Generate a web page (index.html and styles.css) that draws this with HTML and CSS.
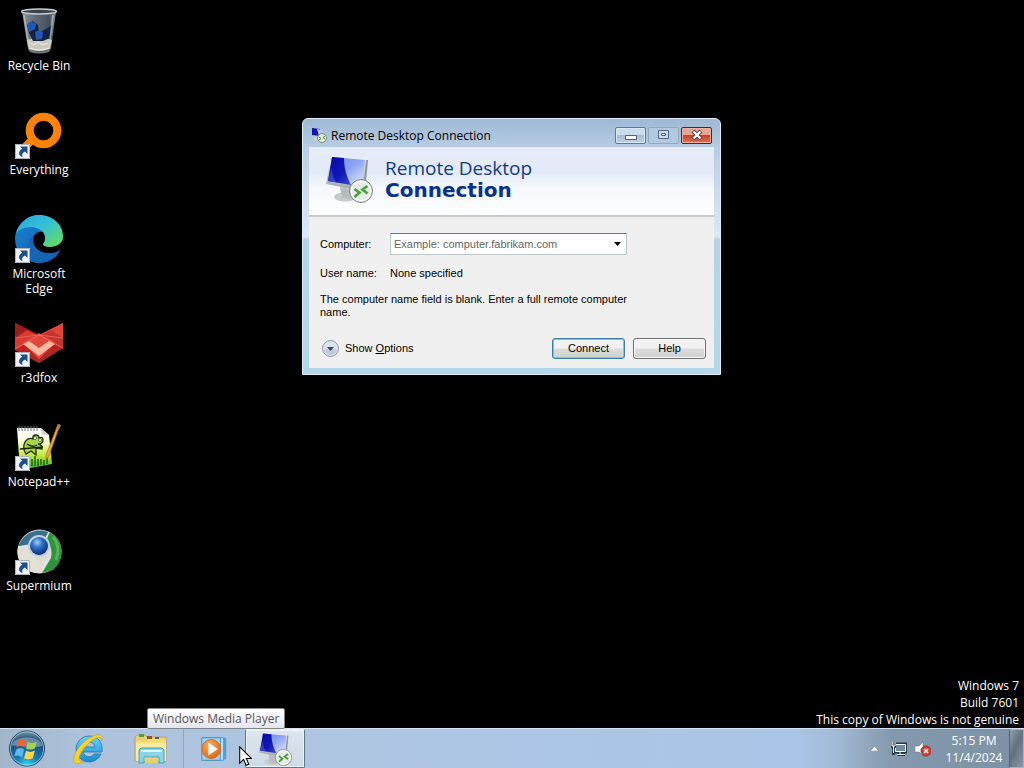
FILE: index.html
```html
<!DOCTYPE html>
<html lang="en">
<head>
<meta charset="utf-8">
<title>Desktop</title>
<link rel="stylesheet" href="styles.css">
</head>
<body>
<svg class="defs" aria-hidden="true">
  <defs>
    <linearGradient id="screen" x1="0" y1="0" x2="1" y2="1"><stop offset="0" stop-color="#6f82ea"/><stop offset=".5" stop-color="#8fa6f2"/><stop offset="1" stop-color="#eef3ff"/></linearGradient>
    <linearGradient id="metal" x1="0" y1="0" x2="0" y2="1"><stop offset="0" stop-color="#f2f3f4"/><stop offset="1" stop-color="#9ea4ab"/></linearGradient>
    <linearGradient id="navy" x1="0" y1="0" x2="1" y2="1"><stop offset="0" stop-color="#0808a0"/><stop offset=".6" stop-color="#1018b8"/><stop offset="1" stop-color="#3a50d0"/></linearGradient>
    <linearGradient id="glass" x1="0" y1="0" x2="1" y2="0"><stop offset="0" stop-color="#8b949c"/><stop offset=".3" stop-color="#66717c"/><stop offset=".8" stop-color="#454f5b"/><stop offset="1" stop-color="#8c969e"/></linearGradient>
    <linearGradient id="edgeTop" x1="0" y1="0" x2="1" y2="1"><stop offset="0" stop-color="#2ba5dc"/><stop offset=".45" stop-color="#35bfd8"/><stop offset="1" stop-color="#6be04d"/></linearGradient>
    <linearGradient id="edgeLow" x1="0" y1="0" x2="1" y2="1"><stop offset="0" stop-color="#1683d5"/><stop offset="1" stop-color="#155ba8"/></linearGradient>
    <linearGradient id="paper" x1="0" y1="0" x2="0" y2="1"><stop offset="0" stop-color="#fff"/><stop offset=".35" stop-color="#f7fbd0"/><stop offset=".65" stop-color="#c5e83c"/><stop offset="1" stop-color="#39a32c"/></linearGradient>
    <linearGradient id="ie" x1="0" y1="0" x2="0" y2="1"><stop offset="0" stop-color="#6bd3f7"/><stop offset="1" stop-color="#168bd2"/></linearGradient>
    <radialGradient id="globe" cx=".4" cy=".3" r=".7"><stop offset="0" stop-color="#a7d2fa"/><stop offset=".4" stop-color="#3272c8"/><stop offset="1" stop-color="#0a2d78"/></radialGradient>
    <radialGradient id="orb" cx=".5" cy="1" r="1"><stop offset="0" stop-color="#38dcf4"/><stop offset=".35" stop-color="#147ab4"/><stop offset=".75" stop-color="#1c4b78"/><stop offset="1" stop-color="#7898ae"/></radialGradient>
    <radialGradient id="wmp" cx=".4" cy=".3" r=".8"><stop offset="0" stop-color="#f8a95b"/><stop offset="1" stop-color="#dc640d"/></radialGradient>
    <symbol id="shortcut" viewBox="0 0 15 15">
      <path d="M0 0h15v15H0z" fill="#eef2f6"/><path d="M.5.5h14v14H.5z" fill="none" stroke="#a9b4bf"/>
      <path d="M5 2.500h7.500V10L10 7.500C7.500 8.500 6.500 10.500 7.500 13 3.500 12 2.500 7.500 7.200 4.700z" fill="#1d5088"/>
    </symbol>
    <symbol id="remote" viewBox="0 0 48 48">
      <ellipse cx="20" cy="42" rx="11" ry="4.500" fill="#c6cacd"/>
      <path d="M15 32l14 3 2 9-14-1z" fill="#b7bcc1"/>
      <path d="M6 1l36 3-2 33L1 29z" fill="url(#metal)"/>
      <path d="M7 2l33 3-3 27L3 26z" fill="url(#screen)"/>
      <path d="M7 2l12 1c0 11 3 19 7 27L3 26z" fill="url(#navy)"/>
      <path d="M7 12c0 7 1 11 5 15.500L3 26z" fill="#3f58cc" opacity=".7"/>
      <path d="M41 5l2 0-3 32-2-.5z" fill="#8e959e"/>
      <circle cx="36" cy="36" r="11.500" fill="#e6eae6" stroke="#7d8580"/>
      <circle cx="36" cy="36" r="9.500" fill="none" stroke="#fff" stroke-width="1"/>
      <path d="M29.500 34l5 3.700-5 4.300M42.500 31l-5 3.500 5 4" fill="none" stroke="#45a237" stroke-width="2.600"/>
    </symbol>
  </defs>
</svg>

<main class="desktop">
  <nav class="shortcuts" aria-label="Desktop shortcuts">
    <button class="shortcut">
      <svg class="shortcut-icon" viewBox="0 0 48 48">
        <path d="M7 4l6 38q1 4 11 4t12-4l5-38z" fill="url(#glass)"/>
        <path d="M12 33q12-5 25 0l-2 9q-11 4-21 0z" fill="#cac8c1"/>
        <path d="M12 18l6-4 5 4 1 7 5-2 7-1-1 9-7 3-10 0-4-8z" fill="#14243f"/>
        <path d="M12 18q3-6 9-1l-1 5-6 3zM20 25q4-3 8 0l-1 7-6 1z" fill="#2256b8"/>
        <path d="M28 24l9-6-2 7-5 1z" fill="#102548"/>
        <path d="M9 8l5 32M38 8l-4 32" stroke="#d0d7dc" stroke-opacity=".6" stroke-width="1.500"/>
        <path d="M15 36l4 2 4-3 5 3 5-2M15 41q9 4 19 0" stroke="#f1eee4" fill="none"/>
        <ellipse cx="24" cy="4.500" rx="17.500" ry="2.500" fill="#37434e" stroke="#c7cdd1" stroke-width="1.300"/>
        <path d="M14 43q10 4 21 0l-1 2q-10 3-19 0z" fill="#74787c"/>
      </svg>
      <span>Recycle Bin</span>
    </button>
    <button class="shortcut">
      <svg class="shortcut-icon" viewBox="0 0 48 48">
        <circle cx="28.500" cy="19.500" r="13.800" fill="none" stroke="#ff8207" stroke-width="8"/>
        <path d="M18 28L9 37" stroke="#ff8207" stroke-width="8"/>
        <use href="#shortcut" x="0" y="33" width="15" height="15"/>
      </svg>
      <span>Everything</span>
    </button>
    <button class="shortcut">
      <svg class="shortcut-icon" viewBox="0 0 48 48">
        <circle cx="24" cy="24" r="24" fill="url(#edgeLow)"/>
        <path d="M1 19C4 8 13 0 24 0c14 0 24 10 24 21 0 7-6 11-13 11-5 0-7-1-7-3 0-1 2-2 2-6 0-6-6-11-14-11C9 12 3 15 1 19z" fill="url(#edgeTop)"/>
        <path d="M28 17c-6-1-10 3-10 8 0 8 8 14 17 13 5 0 10-2 13-6V25c-3 5-8 7-13 7-5 0-7-1-7-3 0-1 2-2 2-6 0-2-1-4-2-6z" fill="#000"/>
        <path d="M18 22c-2 10 5 20 17 18 4 0 7-1 10-4-4 7-12 12-21 12C13 48 9 35 13 28c1-3 3-5 5-6z" fill="#1764b4"/>
        <use href="#shortcut" x="0" y="33" width="15" height="15"/>
      </svg>
      <span>Microsoft Edge</span>
    </button>
    <button class="shortcut">
      <svg class="shortcut-icon" viewBox="0 0 48 48">
        <path d="M0 4l24 12L48 4v25L24 44 0 31z" fill="#bd211e"/>
        <path d="M0 4l24 12-14 8L0 19z" fill="#a01c1b"/>
        <path d="M48 4L24 16l14 8 10-5z" fill="#e24439"/>
        <path d="M0 19l12-8 12 6-24 14z" fill="#d93a30"/>
        <path d="M48 19l-12-8-12 6 24 13z" fill="#c5342e"/>
        <path d="M8 23l16-9 16 9-16 18z" fill="#e0463a"/>
        <path d="M8 25l6-3 10 7 10-7 6 3-16 12z" fill="#ffb8a0"/>
        <path d="M10 31l14 9 14-9v4L24 44 10 36z" fill="#a82a25"/>
        <path d="M0 19l24-3 24 3M0 30l24-14 24 13" fill="none" stroke="#f27463" stroke-width=".7"/>
        <use href="#shortcut" x="0" y="33" width="15" height="15"/>
      </svg>
      <span>r3dfox</span>
    </button>
    <button class="shortcut">
      <svg class="shortcut-icon" viewBox="0 0 48 48">
        <path d="M2 5h24l8 7 3 29-32 6z" fill="url(#paper)"/>
        <path d="M25 5l2 7h7z" fill="#ced5d3"/>
        <path d="M4 3v5M7 3v5M10 3v5M13 3v5M16 3v5M19 3v5M22 3v5" stroke="#6f7472"/>
        <path d="M10 19q3-5 8-3-1-4 3-4 3 0 3 3 4-2 4 2 0 4-5 4 5 1 4 5l-6-1 0 7-5-4-5 3q-4-6-1-12z" fill="#a8d545" stroke="#222d11" stroke-width="1.300"/>
        <circle cx="20" cy="15" r="1.500" fill="#fff" stroke="#222d11" stroke-width=".6"/><circle cx="25" cy="17" r="1.500" fill="#fff" stroke="#222d11" stroke-width=".6"/>
        <path d="M5 26l23-2M12 21q5 4 10 1" fill="none" stroke="#17220d" stroke-width="1.300"/>
        <path d="M17 43v-7M20 43v-10M23 43v-7M26 42v-6M29 42v-5M32 41v-7" stroke="#176f20" stroke-width="1.600"/>
        <path d="M45 2L34 33l-3 4 0-5L43 1z" fill="#ebad22" stroke="#8b611b" stroke-width=".6"/>
        <path d="M43 1l3 1-2 5-3-1z" fill="#a87b55"/>
        <use href="#shortcut" x="0" y="33" width="15" height="15"/>
      </svg>
      <span>Notepad++</span>
    </button>
    <button class="shortcut">
      <svg class="shortcut-icon" viewBox="0 0 48 48">
        <circle cx="24.500" cy="24.500" r="22" fill="#dedbd2"/>
        <path d="M3 20C7 7 20 0 34 5l-3 7-18 8z" fill="#376f8d"/>
        <path d="M34 5c15 7 17 27 4 38L27 46l9-15q2-10-4-18z" fill="#2d943c"/>
        <path d="M3 20l11-2 2 9 8 8 10-2-9 13C10 47 0 34 3 20z" fill="#e4dfd4"/>
        <path d="M3 20l12-2M34 5l-4 8M34 31l-8 14" fill="none" stroke="#dce9e6" stroke-width="1.500"/>
        <circle cx="24" cy="19" r="11" fill="#bdd1df"/><circle cx="24" cy="19" r="9" fill="url(#globe)"/>
        <path d="M38 10q8 9 3 23" fill="none" stroke="#80cf79" stroke-width="3" opacity=".5"/>
        <use href="#shortcut" x="0" y="33" width="15" height="15"/>
      </svg>
      <span>Supermium</span>
    </button>
  </nav>

  <section class="window" aria-labelledby="window-title">
    <header class="titlebar">
      <svg class="title-icon" viewBox="0 0 16 16"><path d="M1 1l8 1v7L1 8z" fill="#1016a7"/><path d="M6 2l6 1-1 7-3-1z" fill="#b8c9ef"/><path d="M2 10l6 1-1 2H3z" fill="#cbd1d5"/><circle cx="11" cy="11" r="4.500" fill="#e0e9dd" stroke="#789078"/><path d="M8 10l2 1.500L8 13M14 9l-2 1.500L14 12" fill="none" stroke="#459335"/></svg>
      <h1 class="title" id="window-title">Remote Desktop Connection</h1>
      <div class="controls">
        <button class="control" aria-label="Minimize"><svg viewBox="0 0 16 12"><path d="M2.500 6.500h11v4h-11z" fill="#fff" stroke="#4e6274"/></svg></button>
        <button class="control control-disabled" aria-label="Maximize" disabled><svg viewBox="0 0 16 12"><path d="M2.500 1.500h10v8h-10z" fill="#cedcea" stroke="#4e6785"/><path d="M5.500 4.500h4v2h-4z" fill="#e6eff6" stroke="#4e6785"/></svg></button>
        <button class="control control-close" aria-label="Close"><svg viewBox="0 0 16 12"><path d="M4 2l8 8M12 2l-8 8" stroke="#6a3732" stroke-width="4"/><path d="M4.500 2.500l7 7M11.500 2.500l-7 7" stroke="#fff" stroke-width="2.400"/></svg></button>
      </div>
    </header>
    <div class="client">
      <div class="banner">
        <svg class="banner-icon"><use href="#remote"/></svg>
        <h2 class="banner-title">Remote Desktop <strong>Connection</strong></h2>
      </div>
      <form class="form" onsubmit="return false">
        <div class="fields">
          <label for="computer">Computer:</label>
          <div class="combo">
            <input id="computer" type="text" placeholder="Example: computer.fabrikam.com">
            <button type="button" aria-label="Show computers"><svg viewBox="0 0 7 4"><path d="M0 0h7L3.500 4z"/></svg></button>
          </div>
          <span>User name:</span>
          <span>None specified</span>
        </div>
        <p class="message">The computer name field is blank. Enter a full remote computer name.</p>
        <div class="actions">
          <button class="options" type="button"><svg viewBox="0 0 17 17"><circle cx="8.500" cy="8.500" r="8" fill="#dde2ed" stroke="#8f99ae"/><path d="M2 10q6-3 13 0-2 5-6.500 5T2 10z" fill="#c3ccdd"/><path d="M5 7h7l-3.500 4z" fill="#344867"/></svg><span>Show <u>O</u>ptions</span></button>
          <button class="push push-default" type="submit">Connect</button>
          <button class="push" type="button">Help</button>
        </div>
      </form>
    </div>
  </section>

  <div class="watermark"><p>Windows 7</p><p>Build 7601</p><p>This copy of Windows is not genuine</p></div>
</main>

<footer class="taskbar">
  <button class="start" aria-label="Start">
    <svg viewBox="0 0 40 40">
      <circle cx="20" cy="20" r="18" fill="url(#orb)" stroke="#244b6b"/>
      <path d="M4 17C7 6 33 6 36 17 27 21 13 16 4 17z" fill="#dbe8ef" opacity=".4"/>
      <path d="M11 12q4-3 8 0l-2 7q-4-3-8 0z" fill="#ec6730"/>
      <path d="M21 13q4 3 9 0l-2 7q-5 2-9 0z" fill="#a4d34b"/>
      <path d="M9 21q4-3 8 0l-2 8q-4-3-8-1z" fill="#5eb8ed"/>
      <path d="M19 22q4 3 9 0l-2 8q-5 2-9 0z" fill="#ffd34b"/>
      <circle cx="20" cy="20" r="17" fill="none" stroke="#c5eaf5" stroke-opacity=".65"/>
    </svg>
  </button>
  <div class="apps">
    <button class="app" aria-label="Internet Explorer">
      <svg viewBox="0 0 34 34">
        <path d="M17 4a13 13 0 1 0 12 18h-7c-2 4-9 4-11-2h19C31 10 26 4 17 4zm-6 11c1-7 11-7 12 0z" fill="url(#ie)" stroke="#1977ae" stroke-width=".8" fill-rule="evenodd"/>
        <path d="M30 9c2-8-5-8-14-2C5 14-1 27 3 31c2 2 6 0 9-2-5 1-6-1-4-6C12 14 24 3 29 6z" fill="#f6d42b" stroke="#c69b18" stroke-width=".6"/>
      </svg>
    </button>
    <button class="app" aria-label="Windows Explorer">
      <svg viewBox="0 0 34 34">
        <path d="M1 5l2-2h8l2 2h19v24H1z" fill="#e8cf72" stroke="#b7963c" stroke-width=".7"/>
        <path d="M5 2h5v3H5z" fill="#35a746"/><path d="M13 4h5v3h-5z" fill="#954e36"/><path d="M21 5h4v2h-4z" fill="#42677b"/>
        <path d="M2 9h30v20H2z" fill="#fbeca0"/><path d="M2 9h11l3-2h16v4H2z" fill="#f8dc78"/>
        <path d="M5 31V19q0-3 3-3h19q3 0 3 3v12h-5v-6H10v6z" fill="#8bd5ec" stroke="#479fbd"/>
        <path d="M11 26h13v5H11z" fill="#e7d26d"/><path d="M7 19h21" stroke="#d7f7ff" stroke-width="2"/>
      </svg>
    </button>
    <button class="app app-player" aria-label="Windows Media Player" aria-describedby="tip">
      <svg viewBox="0 0 34 34">
        <path d="M10 5h20v23H10z" fill="#4d9fd0"/><path d="M8 5h19v24H8z" fill="#c4e8f8" stroke="#4c9dcb"/>
        <path d="M4 5h20v24H4z" fill="#9dd3ee" stroke="#438fbf"/><circle cx="14" cy="17" r="10" fill="url(#wmp)" stroke="#d9641c"/>
        <path d="M11 10l10 7-10 7z" fill="#fff"/>
      </svg>
    </button>
    <button class="app app-active" aria-label="Remote Desktop Connection"><svg><use href="#remote"/></svg></button>
    <span class="tooltip" id="tip" role="tooltip">Windows Media Player</span>
  </div>
  <div class="tray">
    <button aria-label="Show hidden icons" class="tray-icon tray-caret"><svg viewBox="0 0 9 5"><path d="M4.500 0L9 5H0z" fill="#fff" stroke="#566779" stroke-width=".5"/></svg></button>
    <button aria-label="Network" class="tray-icon"><svg viewBox="0 0 16 16"><path d="M4 3h11v8H4zM7 13.500h7M10 11v3" fill="none" stroke="#26394a" stroke-width="3"/><path d="M4.500 3.500h10v7h-10z" fill="#718ba1" stroke="#f6fbff"/><path d="M0 1v5h4V1M2 6v7h2M9 11v2M6 13.500h8" fill="none" stroke="#26394a" stroke-width="2"/><path d="M1 1v4h3V1M2.500 5v7M9 11v2M6 13.500h8" fill="none" stroke="#f6fbff"/></svg></button>
    <button aria-label="Volume muted" class="tray-icon"><svg viewBox="0 0 16 16"><path d="M0 5h4l4-4v14l-4-4H0z" fill="#fff" stroke="#6b7b88" stroke-width=".6"/><circle cx="11" cy="10" r="5" fill="#d53f38" stroke="#a92823"/><path d="M9 8l4 4M13 8l-4 4" stroke="#fff" stroke-width="1.500"/></svg></button>
    <time class="clock" datetime="2024-11-04T17:15"><span>5:15 PM</span><span>11/4/2024</span></time>
    <button class="peek" aria-label="Show desktop"></button>
  </div>
  <svg class="cursor" viewBox="0 0 12 19" aria-hidden="true"><path d="M.5.8v15.500l3.700-3.500 2.400 5.500 2.500-1-2.400-5.400h5z" fill="#fff" stroke="#000"/></svg>
</footer>
</body>
</html>
```

FILE: styles.css
```css
* { box-sizing: border-box; }

body {
  margin: 0;
  min-height: 100vh;
  display: flex;
  flex-direction: column;
  background: #000;
  color: #fff;
  font: 12px/15px "Open Sans", "Noto Sans", sans-serif;
}

h1, h2, p { margin: 0; font-weight: 400; }

button {
  padding: 0;
  border: 0;
  background: none;
  color: inherit;
  font: inherit;
}

svg { display: block; }
.defs { position: absolute; width: 0; height: 0; }

.desktop {
  position: relative;
  flex: 1;
  display: flex;
  justify-content: space-between;
}

.shortcuts {
  display: grid;
  grid-auto-rows: 104px;
  width: 78px;
  padding-top: 7px;
}

.shortcut {
  display: flex;
  flex-direction: column;
  align-items: center;
  gap: 3px;
}

.shortcut-icon { width: 48px; height: 48px; flex: none; }

.watermark {
  align-self: flex-end;
  padding: 0 5px 0 0;
  text-align: right;
  line-height: 17px;
}

/* Remote Desktop window */
.window {
  position: absolute;
  left: 302px;
  top: 118px;
  width: 419px;
  padding: 0 6px 6px;
  border: 1px solid #d9edf8;
  border-radius: 6px 6px 0 0;
  background: linear-gradient(#9db9d5, #b6cce2 28px, #c7d7eb 60px, #dce8f5 118px, #b6d3e8 120px, #b4d8e8);
  color: #000;
}

.titlebar {
  display: flex;
  align-items: center;
  gap: 4px;
  height: 28px;
  padding: 4px 2px 0;
}

.title-icon { width: 16px; height: 16px; }
.title { flex: 1; padding-top: 2px; font-size: 12px; line-height: 16px; }
.controls { display: flex; gap: 2px; }

.control {
  display: grid;
  place-items: center;
  width: 31px;
  height: 17px;
  border: 1px solid #60799a;
  border-radius: 2px;
  background: linear-gradient(#cbdceb 45%, #a4bdd5 50%, #c1d4e7);
  box-shadow: inset 0 0 0 1px #d9e8f3;
}

.control svg { width: 16px; height: 12px; }
.control-disabled { border-color: #92a8bf; background: #b3c9df; box-shadow: none; }
.control-close { border-color: #4d2531; background: linear-gradient(#e3a699 45%, #c5462e 50%, #dc7457); box-shadow: inset 0 0 0 1px #efb4a6; }

.client { background: #f0f0f0; }

.banner {
  display: flex;
  gap: 12px;
  padding: 8px 16px 12px;
  border-bottom: 2px solid #c7c9cb;
  background: linear-gradient(#e7edf7, #e2eaf7 35%, #f5f8fd 60%, #fff);
}

.banner-icon { width: 48px; height: 48px; }

.banner-title {
  display: flex;
  flex-direction: column;
  color: #123b86;
  font-size: 19px;
  line-height: 22px;
  padding-top: 2px;
}

.banner-title strong { color: #06318c; font-family: "DejaVu Sans", sans-serif; font-size: 20px; }

.form {
  display: grid;
  gap: 13px;
  padding: 16px 8px 9px 11px;
  font: 11px/13px "Liberation Sans", Arial, sans-serif;
}

.fields {
  display: grid;
  grid-template-columns: 70px 237px;
  row-gap: 12px;
  align-items: center;
}

.combo {
  display: flex;
  height: 22px;
  border: 1px solid #b8c9d5;
  border-top-color: #517d98;
  background: #fff;
}

.combo input {
  flex: 1;
  min-width: 0;
  padding: 0 3px;
  border: 0;
  outline: 0;
  background: none;
  font: inherit;
}

.combo input::placeholder { color: #666; opacity: 1; }
.combo button { width: 17px; display: grid; place-items: center; }
.combo button svg { width: 7px; height: 4px; }
.message { max-width: 310px; }

.actions {
  display: flex;
  align-items: center;
  gap: 8px;
  padding-top: 6px;
}

.options { display: flex; align-items: center; gap: 6px; margin-right: auto; padding-left: 2px; }
.options svg { width: 17px; height: 17px; }

.push {
  width: 73px;
  height: 21px;
  border: 1px solid #707070;
  border-radius: 3px;
  background: linear-gradient(#f2f2f2 48%, #dddddd 52%, #cfcfcf);
  box-shadow: inset 0 0 0 1px #fafafa;
}

.push-default { border-color: #3c7f9f; box-shadow: inset 0 0 0 1px #5dd3ee; }

/* Taskbar */
.taskbar {
  position: relative;
  display: flex;
  height: 40px;
  border-top: 1px solid #d6e2ed;
  background: linear-gradient(90deg, #a3b5c9, #adc2dc 8%, #aec6e2 35%, #a9c5e7 78%, #a0b9d3 82%, #8499ae 87%, #7e91a4);
}

.start { width: 54px; display: grid; place-items: center; }
.start svg { width: 40px; height: 39px; }
.apps { position: relative; display: flex; flex: 1; gap: 2px; padding-left: 5px; }

.app {
  display: grid;
  place-items: center;
  width: 60px;
}

.app svg { width: 34px; height: 34px; }
.app-player { border-left: 1px solid #91a9c0; }
.app-player svg { width: 32px; height: 32px; }
.app-active { border: 1px solid #5d7489; border-top-color: #e8f1f8; border-radius: 2px; background: linear-gradient(#dde6ef, #cedae7); box-shadow: inset 0 0 0 1px #edf4f8; }

.tooltip {
  position: absolute;
  left: 93px;
  bottom: 39px;
  padding: 2px 5px;
  border: 1px solid #858585;
  border-radius: 2px;
  background: linear-gradient(#fff, #e5e5ef);
  color: #575757;
  white-space: nowrap;
}

.tray { display: flex; align-items: center; gap: 8px; }
.tray-icon svg { width: 16px; height: 16px; }
.tray-caret { padding-right: 4px; }
.tray-caret svg { width: 9px; height: 5px; }
.clock { display: grid; width: 70px; margin-right: -8px; text-align: center; font-size: 12px; line-height: 17px; }
.peek { align-self: stretch; width: 15px; border: 1px solid #a5b3bf; border-left-color: #526575; background: linear-gradient(115deg, #91a1af, #61717f 45%, #8999a7); }
.cursor { position: absolute; left: 239px; top: 17px; width: 13px; height: 20px; }
```
